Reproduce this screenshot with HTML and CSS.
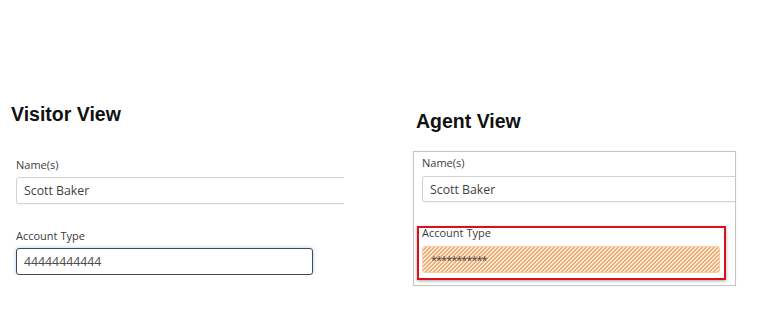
FILE: index.html
```html
<!DOCTYPE html>
<html lang="en">
<head>
<meta charset="utf-8">
<title>Visitor vs Agent View</title>
<link rel="stylesheet" href="styles.css">
</head>
<body>
<main class="page">
  <section class="visitor">
    <h2 class="view-title">Visitor View</h2>
    <div class="field">
      <label class="field-label">Name(s)</label>
      <input class="text-input wide" type="text" value="Scott Baker" readonly>
    </div>
    <div class="field second">
      <label class="field-label">Account Type</label>
      <input class="text-input focused" type="text" value="44444444444" readonly>
    </div>
  </section>
  <section class="agent">
    <h2 class="view-title agent-title">Agent View</h2>
    <div class="agent-box">
      <div class="agent-field">
        <label class="field-label">Name(s)</label>
        <input class="text-input agent-name" type="text" value="Scott Baker" readonly>
      </div>
      <div class="highlight">
        <label class="field-label tight">Account Type</label>
        <input class="text-input masked" type="text" value="***********" readonly>
      </div>
    </div>
  </section>
</main>
</body>
</html>
```

FILE: styles.css
```css
html, body {
  margin: 0;
  padding: 0;
  background: #ffffff;
}

.page {
  display: flex;
  align-items: flex-start;
  width: 761px;
  height: 335px;
  overflow: hidden;
}

.view-title {
  margin: 0;
  font-family: "Liberation Sans", Arial, sans-serif;
  font-weight: bold;
  font-size: 19.5px;
  line-height: 22px;
  color: #111111;
}

.visitor {
  width: 344px;
  flex: none;
  overflow: hidden;
  padding-top: 103px;
}

.visitor .view-title {
  margin-left: 11px;
}

.field {
  margin-left: 16px;
  margin-top: 32px;
  display: flex;
  flex-direction: column;
  align-items: flex-start;
}

.field.second {
  margin-top: 24px;
}

.field-label {
  display: block;
  font-family: "Open Sans", sans-serif;
  font-size: 11px;
  line-height: 15px;
  color: #3b3b3b;
  margin-bottom: 5px;
}

.text-input {
  box-sizing: border-box;
  height: 27px;
  margin: 0;
  padding: 0 7px;
  font-family: "Open Sans", sans-serif;
  font-size: 12.3px;
  color: #3f3f3f;
  background: #ffffff;
  border: 1px solid #d2d2d2;
  border-radius: 3px;
  outline: none;
  box-shadow: 0 1px 1px rgba(0, 0, 0, 0.04);
}

.text-input.wide {
  width: 360px;
}

.text-input.focused {
  width: 297px;
  border-color: #414a56;
  box-shadow: 0 0 4px rgba(90, 150, 225, 0.45);
  color: #4a4a4a;
}

.agent {
  flex: none;
  margin-left: 69px;
  padding-top: 110px;
}

.agent-title {
  margin-left: 3px;
}

.agent-box {
  box-sizing: border-box;
  width: 323px;
  height: 135px;
  margin-top: 19px;
  border: 1px solid #c4c4c4;
  box-shadow: 0 0 1px rgba(0, 0, 0, 0.08);
  overflow: hidden;
  padding-top: 3px;
}

.agent-field {
  padding-left: 8px;
  display: flex;
  flex-direction: column;
  align-items: flex-start;
}

.agent-field .field-label {
  margin-bottom: 6px;
}

.text-input.agent-name {
  width: 340px;
  height: 26px;
}

.highlight {
  box-sizing: border-box;
  width: 309px;
  height: 54px;
  margin: 24px 0 0 3px;
  padding: 0 4px 0 3px;
  border: 2px solid #d6121b;
  box-shadow: 0 1px 3px rgba(0, 0, 0, 0.35);
  display: flex;
  flex-direction: column;
  align-items: flex-start;
}

.field-label.tight {
  line-height: 12px;
  margin-top: -1px;
  margin-bottom: 7px;
}

.text-input.masked {
  width: 298px;
  padding-left: 8px;
  font-size: 11px;
  letter-spacing: -1px;
  color: #444444;
  border: 1px solid #f1cfae;
  background-color: #fdefe2;
  background-image:
    linear-gradient(-45deg,
      rgba(242, 158, 90, 0.8) 18%, transparent 18%,
      transparent 50%, rgba(242, 158, 90, 0.8) 50%,
      rgba(242, 158, 90, 0.8) 68%, transparent 68%),
    linear-gradient(45deg,
      rgba(242, 170, 110, 0.35) 14%, transparent 14%,
      transparent 50%, rgba(242, 170, 110, 0.35) 50%,
      rgba(242, 170, 110, 0.35) 64%, transparent 64%);
  background-size: 4px 4px;
  box-shadow: none;
}
```
